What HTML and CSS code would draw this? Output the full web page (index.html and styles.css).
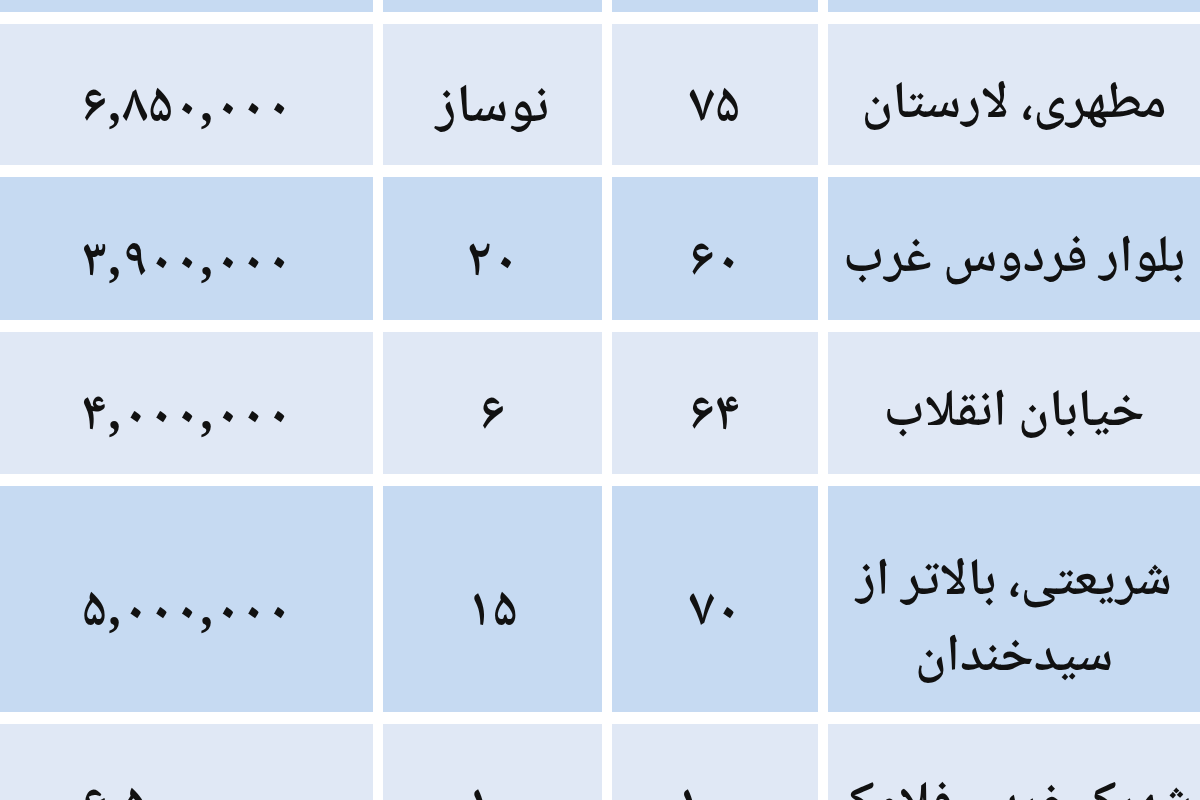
FILE: index.html
```html
<!DOCTYPE html>
<html lang="fa" dir="rtl">
<head>
<meta charset="utf-8">
<title>جدول قیمت</title>
<link rel="stylesheet" href="styles.css">
</head>
<body>
<div class="sheet">
  <div class="table">
    <div class="row dark">
      <div class="cell"></div><div class="cell"></div><div class="cell"></div><div class="cell"></div>
    </div>
    <div class="row light">
      <div class="cell loc">مطهری، لارستان</div>
      <div class="cell num">۷۵</div>
      <div class="cell num">نوساز</div>
      <div class="cell num">۶,۸۵۰,۰۰۰</div>
    </div>
    <div class="row dark">
      <div class="cell loc">بلوار فردوس غرب</div>
      <div class="cell num">۶۰</div>
      <div class="cell num">۲۰</div>
      <div class="cell num">۳,۹۰۰,۰۰۰</div>
    </div>
    <div class="row light">
      <div class="cell loc">خیابان انقلاب</div>
      <div class="cell num">۶۴</div>
      <div class="cell num">۶</div>
      <div class="cell num">۴,۰۰۰,۰۰۰</div>
    </div>
    <div class="row dark">
      <div class="cell loc two">شریعتی، بالاتر از<br>سیدخندان</div>
      <div class="cell num">۷۰</div>
      <div class="cell num">۱۵</div>
      <div class="cell num">۵,۰۰۰,۰۰۰</div>
    </div>
    <div class="row light">
      <div class="cell loc">شهرک غرب، فلامک</div>
      <div class="cell num">۱۰۰</div>
      <div class="cell num">۱۰</div>
      <div class="cell num">۶,۵۰۰,۰۰۰</div>
    </div>
  </div>
</div>
</body>
</html>
```

FILE: styles.css
```css
html, body {
  margin: 0;
  padding: 0;
  background: #ffffff;
}

.sheet {
  width: 1200px;
  height: 800px;
  overflow: hidden;
  background: #ffffff;
}

.table {
  display: grid;
  grid-template-columns: 372px 206px 219px 373px;
  grid-template-rows: 12px 141px 143px 142px 226px 141px;
  column-gap: 10px;
  row-gap: 12px;
  direction: rtl;
  font-family: "Noto Naskh Arabic", "Noto Sans Arabic", "DejaVu Sans", sans-serif;
  color: #111111;
}

.row {
  display: contents;
}

.cell {
  display: flex;
  align-items: center;
  justify-content: center;
  text-align: center;
  font-size: 54px;
  font-weight: 600;
  overflow: hidden;
  box-sizing: border-box;
}

.light .cell {
  background: #e0e8f5;
}

.dark .cell {
  background: #c6daf2;
}

.loc {
  line-height: 72px;
  white-space: nowrap;
  padding-top: 22px;
  font-size: 52px;
}

.loc.two {
  line-height: 76px;
  padding-top: 44px;
}

.num {
  padding-top: 28px;
}
```
